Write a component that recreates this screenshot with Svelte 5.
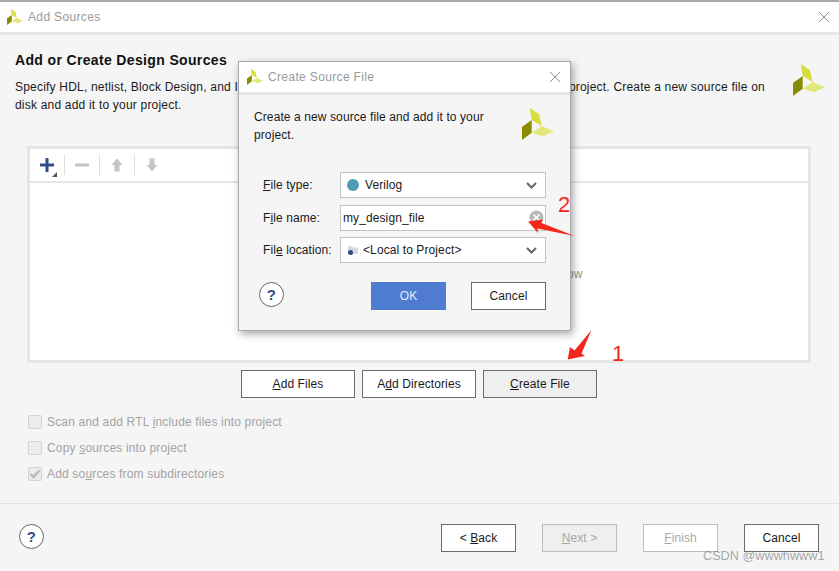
<script lang="ts">
	const options = [
		{ before: "Scan and add RTL ", key: "i", after: "nclude files into project", checked: false },
		{ before: "Copy ", key: "s", after: "ources into project", checked: false },
		{ before: "Add so", key: "u", after: "rces from subdirectories", checked: true }
	];
</script>

{#snippet logo(size: number)}
	<svg class="logo" width={size} height={size} viewBox="0 0 32 32">
		<polygon points="7.7,0 17,6 19.7,18 9.7,12" fill="#d6dd3c" />
		<polygon points="9.7,12 9.7,24.7 0,32 0,19" fill="#8a8c00" />
		<polygon points="32,23.3 19.7,18 9.7,24.7 21,28.3" fill="#e3e87c" />
	</svg>
{/snippet}

{#snippet help()}
	<span class="help">?</span>
{/snippet}

{#snippet closeIcon()}
	<svg width="12" height="12" viewBox="0 0 12 12" class="close">
		<path d="M1 1L11 11M11 1L1 11" stroke="#8f8f8f" stroke-width="1" fill="none" />
	</svg>
{/snippet}

{#snippet chevron()}
	<svg class="chevron" width="11" height="7" viewBox="0 0 11 7">
		<path d="M1 1L5.5 5.5L10 1" stroke="#666" stroke-width="2" fill="none" />
	</svg>
{/snippet}

<div class="page">
	<header class="titlebar">
		{@render logo(16)}
		<span class="title">Add Sources</span>
		{@render closeIcon()}
	</header>

	<main class="content">
		<div class="intro">
			<div class="intro-text">
				<h1>Add or Create Design Sources</h1>
				<p>Specify HDL, netlist, Block Design, and IP files, or directories containing the HDL files to add to your project. Create a new source file on disk and add it to your project.</p>
			</div>
			{@render logo(32)}
		</div>

		<section class="panel">
			<div class="toolbar">
				<span class="tool plus">
					<svg width="14" height="14" viewBox="0 0 14 14"><path d="M7 0V14M0 7H14" stroke="#2f4d85" stroke-width="3" /></svg>
					<i class="corner"></i>
				</span>
				<span class="tool">
					<svg width="14" height="14" viewBox="0 0 14 14"><path d="M0 7H14" stroke="#c4c4c4" stroke-width="3" /></svg>
				</span>
				<span class="tool">
					<svg width="14" height="14" viewBox="0 0 14 14"><path d="M7 0.5L12.5 7H9.5V13.5H4.5V7H1.5Z" fill="#c4c4c4" /></svg>
				</span>
				<span class="tool last">
					<svg width="14" height="14" viewBox="0 0 14 14"><path d="M7 13.5L12.5 7H9.5V0.5H4.5V7H1.5Z" fill="#c4c4c4" /></svg>
				</span>
			</div>
			<div class="panel-body">
				<span>Use Add Files, Add Directories or Create File buttons below</span>
			</div>
		</section>

		<div class="panel-actions">
			<button class="btn wide"><u>A</u>dd Files</button>
			<button class="btn wide">A<u>d</u>d Directories</button>
			<button class="btn wide focus"><u>C</u>reate File</button>
		</div>

		<div class="options">
			{#each options as opt}
				<label class="option">
					<span class="box">
						{#if opt.checked}
							<svg width="12" height="10" viewBox="0 0 12 10"><path d="M1.5 5L4.5 8L10.5 1.5" stroke="#b9b9b9" stroke-width="2.4" fill="none" /></svg>
						{/if}
					</span>
					<span>{opt.before}<u>{opt.key}</u>{opt.after}</span>
				</label>
			{/each}
		</div>
	</main>

	<footer class="footer">
		{@render help()}
		<div class="footer-actions">
			<button class="btn">&lt; <u>B</u>ack</button>
			<button class="btn disabled next"><u>N</u>ext &gt;</button>
			<button class="btn disabled"><u>F</u>inish</button>
			<button class="btn">Cancel</button>
		</div>
	</footer>

	<div class="dialog">
		<header class="titlebar dialog-title">
			{@render logo(16)}
			<span class="title">Create Source File</span>
			{@render closeIcon()}
		</header>
		<div class="dialog-body">
			<div class="dialog-intro">
				<p>Create a new source file and add it to your project.</p>
				{@render logo(32)}
			</div>
			<div class="form">
				<span class="field-label"><u>F</u>ile type:</span>
				<div class="field">
					<i class="dot"></i>
					<span>Verilog</span>
					{@render chevron()}
				</div>
				<span class="field-label">F<u>i</u>le name:</span>
				<div class="field text">
					<span>my_design_file</span>
					<svg class="clear" width="15" height="15" viewBox="0 0 15 15">
						<circle cx="7.5" cy="7.5" r="7" fill="#b9b9b9" />
						<path d="M4.5 4.5L10.5 10.5M10.5 4.5L4.5 10.5" stroke="#fff" stroke-width="1.6" />
					</svg>
				</div>
				<span class="field-label">Fil<u>e</u> location:</span>
				<div class="field">
					<svg width="12" height="12" viewBox="0 0 12 12">
						<path d="M1 2H5L6 3.5H11V10H1Z" fill="#d9d9d9" />
						<circle cx="3.5" cy="8.5" r="2.5" fill="#2f4d85" />
					</svg>
					<span class="loc">&lt;Local to Project&gt;</span>
					{@render chevron()}
				</div>
			</div>
			<div class="dialog-actions">
				{@render help()}
				<button class="btn primary">OK</button>
				<button class="btn">Cancel</button>
			</div>
		</div>
	</div>

	<svg class="marks" width="839" height="571" viewBox="0 0 839 571">
		<polygon points="567.7,359.5 570,347 574.5,350.5 591.5,330 581.5,353.5 585,356" fill="#f5271c" />
		<polygon points="528,221.5 543,219.5 541.5,223 574.5,236 537.5,228.5 538,233" fill="#f5271c" />
	</svg>
	<span class="mark-num one">1</span>
	<span class="mark-num two">2</span>
	<span class="watermark">CSDN @wwwhwww1</span>
</div>

<style>
	:global(body) {
		margin: 0;
	}

	.page {
		position: relative;
		width: 839px;
		height: 571px;
		overflow: hidden;
		display: flex;
		flex-direction: column;
		background: #f5f5f5;
		border-top: 2px solid #a9a9a9;
		box-sizing: border-box;
		font-family: "Liberation Sans", Arial, sans-serif;
		font-size: 12px;
		letter-spacing: 0.2px;
		color: #1a1a1a;
	}

	.titlebar {
		flex: none;
		height: 30px;
		display: flex;
		align-items: center;
		gap: 5px;
		padding: 0 9px 0 7px;
		background: #fff;
		border-bottom: 3px solid #e6e6e6;
	}

	.title {
		flex: 1;
		color: #9a9a9a;
		letter-spacing: 0.35px;
	}

	.close {
		display: block;
	}

	.logo {
		display: block;
		flex: none;
	}

	.content {
		flex: 1;
		padding: 0 28px 0 27px;
	}

	.intro {
		display: flex;
		justify-content: space-between;
		align-items: flex-start;
		height: 111px;
		margin-left: -12px;
		margin-right: -14px;
	}

	.intro .logo {
		margin-top: 29px;
	}

	.intro-text {
		width: 760px;
	}

	h1 {
		margin: 17px 0 0;
		font-size: 14px;
		line-height: 17px;
		letter-spacing: 0.35px;
		color: #111;
	}

	.intro p {
		margin: 9px 0 0;
		line-height: 18px;
	}

	.panel {
		height: 217px;
		box-sizing: border-box;
		border: 3px solid #e6e6e6;
		background: #fff;
		display: flex;
		flex-direction: column;
	}

	.toolbar {
		flex: none;
		height: 32px;
		display: flex;
		align-items: center;
		border-bottom: 2px solid #e6e6e6;
	}

	.tool {
		position: relative;
		width: 34px;
		height: 20px;
		display: flex;
		align-items: center;
		justify-content: center;
		border-right: 1px solid #ddd;
	}

	.tool.last {
		border-right: none;
	}

	.corner {
		position: absolute;
		right: 7px;
		bottom: -2px;
		border-style: solid;
		border-width: 0 0 5px 5px;
		border-color: transparent transparent #555 transparent;
	}

	.panel-body {
		flex: 1;
		display: flex;
		align-items: center;
		justify-content: center;
		color: #8a9a8a;
		padding-top: 4px;
	}

	.panel-actions {
		display: flex;
		justify-content: center;
		gap: 7px;
		margin-top: 7px;
	}

	.btn {
		width: 75px;
		height: 28px;
		padding: 0;
		box-sizing: border-box;
		background: #fff;
		border: 1px solid #6b6b6b;
		border-radius: 0;
		font: inherit;
		letter-spacing: 0.1px;
		color: #1a1a1a;
	}

	.btn.wide {
		width: 114px;
	}

	.btn.focus {
		background: #efefef;
	}

	.btn.disabled {
		color: #a8a8a8;
		border-color: #bdbdbd;
	}

	.btn.next {
		background: #efefef;
	}

	.btn.primary {
		background: #4f7bd0;
		border: none;
		color: #e4ecf8;
	}

	.options {
		display: flex;
		flex-direction: column;
		gap: 12px;
		margin-top: 17px;
		margin-left: 1px;
		color: #a3a3a3;
		letter-spacing: 0.17px;
	}

	.option {
		display: flex;
		align-items: center;
		gap: 5px;
		height: 14px;
	}

	.box {
		width: 14px;
		height: 14px;
		box-sizing: border-box;
		border: 1px solid #d2d2d2;
		border-radius: 2px;
		background: #ececec;
		display: flex;
		align-items: center;
		justify-content: center;
	}

	.footer {
		flex: none;
		height: 68px;
		box-sizing: border-box;
		border-top: 1px solid #e2e2e2;
		display: flex;
		align-items: flex-start;
		justify-content: space-between;
		padding: 20px 20px 0 19px;
	}

	.footer-actions {
		display: flex;
		gap: 26px;
	}

	.help {
		width: 25px;
		height: 25px;
		box-sizing: border-box;
		border: 1px solid #666;
		border-radius: 50%;
		background: #fff;
		display: flex;
		align-items: center;
		justify-content: center;
		font-size: 15px;
		font-weight: 700;
		color: #2f4d85;
	}

	.dialog {
		position: absolute;
		left: 238px;
		top: 59px;
		width: 333px;
		height: 270px;
		box-sizing: border-box;
		border: 1px solid #a9a9a9;
		background: #f5f5f5;
		box-shadow: 2px 3px 8px rgba(0, 0, 0, 0.35);
		display: flex;
		flex-direction: column;
		letter-spacing: 0.1px;
	}

	.dialog-title {
		height: 33px;
		box-sizing: border-box;
		padding: 0 9px 0 8px;
	}

	.dialog-body {
		flex: 1;
		padding: 0 24px 0 15px;
	}

	.dialog-intro {
		display: flex;
		justify-content: space-between;
		align-items: flex-start;
		height: 77px;
		margin-right: -8px;
	}

	.dialog-intro p {
		margin: 13px 0 0;
		width: 250px;
		line-height: 18px;
	}

	.dialog-intro .logo {
		margin-top: 13px;
	}

	.form {
		display: grid;
		grid-template-columns: 77px 206px;
		grid-template-rows: 26px 26px 26px;
		row-gap: 6.5px;
		align-items: center;
		margin-left: 9px;
	}

	.field {
		height: 26px;
		box-sizing: border-box;
		border: 1px solid #c4c4c4;
		background: #fff;
		display: flex;
		align-items: center;
		padding: 0 8px 0 6px;
		gap: 6px;
		position: relative;
	}

	.field span {
		flex: 1;
	}

	.field.text {
		padding-left: 2px;
	}

	.field .loc {
		margin-left: -2px;
	}

	.dot {
		width: 12px;
		height: 12px;
		border-radius: 50%;
		background: #4f9ab5;
	}

	.clear {
		position: absolute;
		right: 1px;
		top: 4px;
	}

	.dialog-actions {
		display: flex;
		align-items: flex-start;
		margin-top: 19px;
		gap: 25px;
	}

	.dialog-actions .help {
		margin-right: 62px;
		margin-left: 5px;
	}

	.marks {
		position: absolute;
		left: 0;
		top: -2px;
		pointer-events: none;
	}

	.mark-num {
		position: absolute;
		font-size: 22px;
		line-height: 1;
		color: #f5271c;
		letter-spacing: 0;
	}

	.mark-num.one {
		left: 612px;
		top: 341px;
	}

	.mark-num.two {
		left: 558px;
		top: 192px;
	}

	.watermark {
		position: absolute;
		left: 703px;
		top: 547px;
		font-size: 12.7px;
		letter-spacing: 0;
		color: rgba(110, 110, 110, 0.6);
	}
</style>
